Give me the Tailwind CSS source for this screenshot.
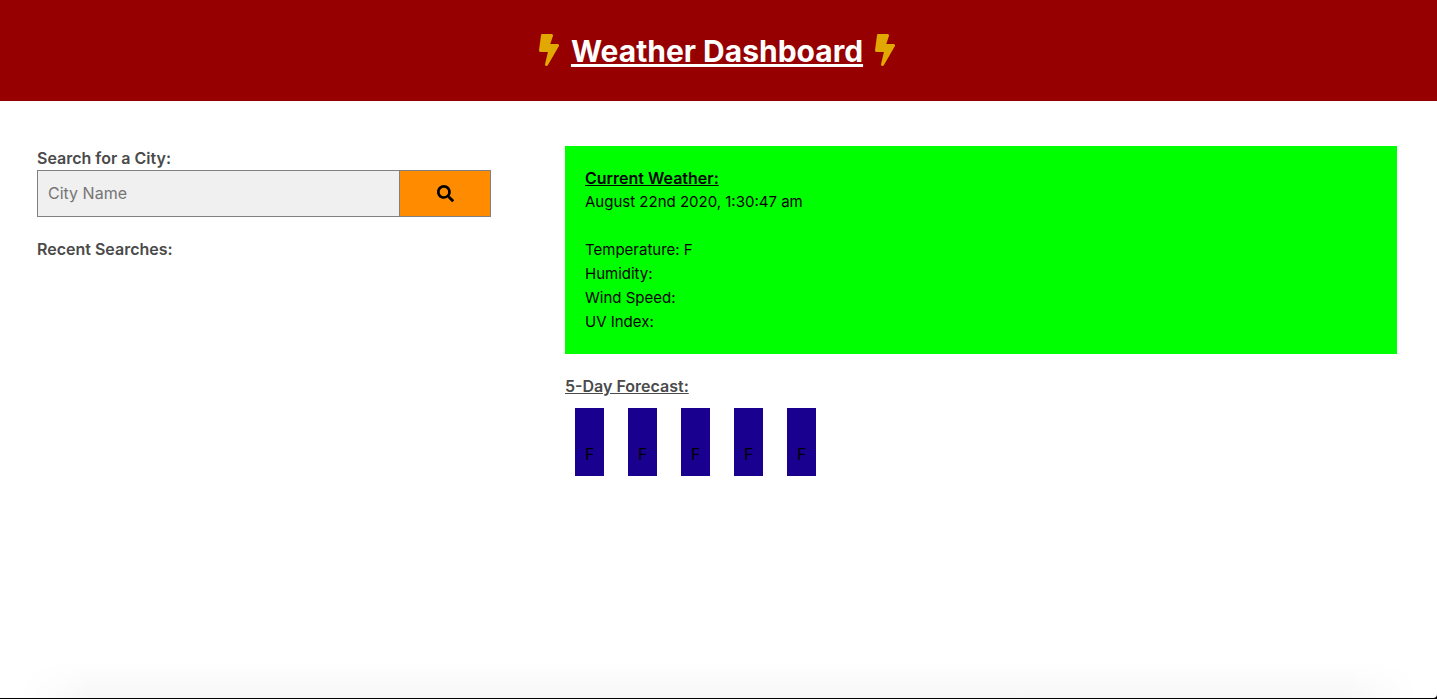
<!DOCTYPE html>
<html lang="en">
<head>
<meta charset="utf-8">
<meta name="viewport" content="width=device-width, initial-scale=1">
<title>Weather Dashboard</title>
<script src="https://cdn.jsdelivr.net/npm/@tailwindcss/browser@4"></script>
</head>
<body class="flex min-h-screen flex-col bg-black font-['Inter','Liberation_Sans',sans-serif] text-[15px] leading-6 text-black">
<div class="mb-px flex grow flex-col rounded-br-sm bg-white">
  <header class="flex h-[101px] items-center justify-center gap-3 bg-[#960000] pr-[3px]">
    <svg class="mb-[2px] h-8 w-5 fill-[#e0a800]" viewBox="0 0 320 512" aria-hidden="true"><path d="M296 160H180.600l42.600-129.800C227.200 15 215.700 0 200 0H56C44 0 33.800 8.900 32.200 20.800l-32 240C-1.700 275.200 9.500 288 24 288h118.700L96.600 482.500c-3.600 15.200 8 29.500 23.300 29.500 8.400 0 16.400-4.400 20.800-12l176-304c9.300-15.900-2.200-36-20.700-36z"/></svg>
    <h1 class="text-[30px] leading-9 font-bold text-white underline decoration-[3px]">Weather Dashboard</h1>
    <svg class="mb-[2px] h-8 w-5 fill-[#e0a800]" viewBox="0 0 320 512" aria-hidden="true"><path d="M296 160H180.600l42.600-129.800C227.200 15 215.700 0 200 0H56C44 0 33.800 8.900 32.200 20.800l-32 240C-1.700 275.200 9.500 288 24 288h118.700L96.600 482.500c-3.600 15.200 8 29.500 23.300 29.500 8.400 0 16.400-4.400 20.800-12l176-304c9.300-15.900-2.200-36-20.700-36z"/></svg>
  </header>
  <main class="grid grow grid-cols-[454fr_832fr] content-start gap-x-[74px] pt-[45px] pr-10 pl-[37px]">
    <section>
      <form>
        <label for="city" class="block text-base font-semibold text-[#4a4a4a]">Search for a City:</label>
        <div class="flex h-[47px] border border-[#808080]">
          <input id="city" type="text" placeholder="City Name" class="min-w-0 grow bg-[#f0f0f0] px-[10px] pb-[2px] text-base placeholder:text-[#757575]">
          <button type="button" aria-label="Search" class="flex w-[91px] shrink-0 items-center justify-center border-l border-[#808080] bg-[#ff8c00]">
            <svg class="size-[17px]" viewBox="0 0 512 512" aria-hidden="true"><path d="M505 442.700L405.300 343c-4.500-4.500-10.600-7-17-7H372c27.600-35.300 44-79.700 44-128C416 93.100 322.900 0 208 0S0 93.100 0 208s93.100 208 208 208c48.300 0 92.700-16.400 128-44v16.300c0 6.400 2.500 12.500 7 17l99.700 99.700c9.400 9.400 24.600 9.400 33.900 0l28.300-28.300c9.400-9.400 9.400-24.600.1-34zM208 336c-70.700 0-128-57.200-128-128 0-70.700 57.200-128 128-128 70.700 0 128 57.200 128 128 0 70.700-57.200 128-128 128z"/></svg>
          </button>
        </div>
      </form>
      <h2 class="mt-5 text-base font-semibold text-[#4a4a4a]">Recent Searches:</h2>
    </section>
    <section>
      <div class="bg-[#00ff00] p-5">
        <h2 class="text-base font-semibold underline">Current Weather:</h2>
        <p class="mb-6">August 22nd 2020, 1:30:47 am</p>
        <p>Temperature: F</p>
        <p>Humidity:</p>
        <p>Wind Speed:</p>
        <p>UV Index:</p>
      </div>
      <h2 class="mt-5 text-base font-semibold text-[#4a4a4a] underline">5-Day Forecast:</h2>
      <div class="mt-[10px] ml-[10px] flex gap-6">
        <div class="flex h-[68px] w-[29px] items-end bg-[#1a008f] p-[10px] text-base">F</div>
        <div class="flex h-[68px] w-[29px] items-end bg-[#1a008f] p-[10px] text-base">F</div>
        <div class="flex h-[68px] w-[29px] items-end bg-[#1a008f] p-[10px] text-base">F</div>
        <div class="flex h-[68px] w-[29px] items-end bg-[#1a008f] p-[10px] text-base">F</div>
        <div class="flex h-[68px] w-[29px] items-end bg-[#1a008f] p-[10px] text-base">F</div>
      </div>
    </section>
  </main>
  <div class="mx-5 h-9 bg-linear-to-b from-white to-[#f7f7f7] mask-x-from-95% mask-x-to-100%"></div>
</div>
</body>
</html>
